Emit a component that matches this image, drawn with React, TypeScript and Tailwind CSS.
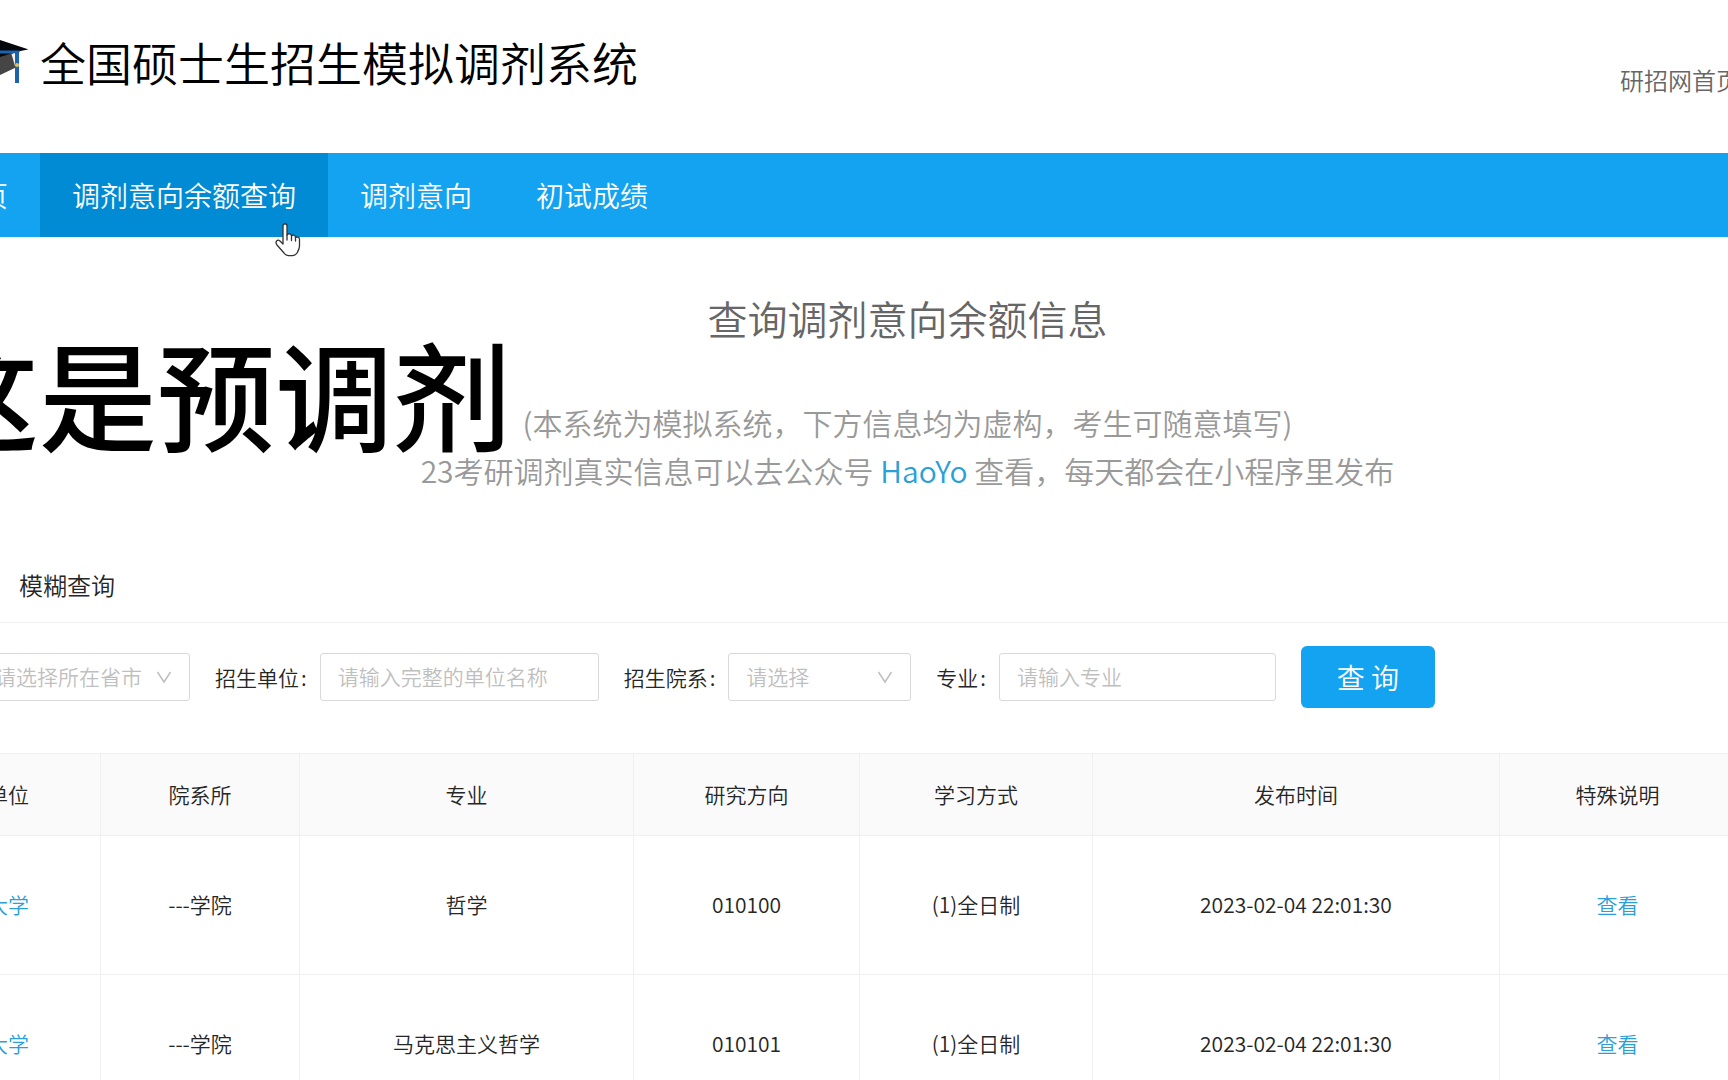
import type { ReactNode } from "react";

const navItems = [
  { label: "首页", active: false },
  { label: "调剂意向余额查询", active: true },
  { label: "调剂意向", active: false },
  { label: "初试成绩", active: false },
];

const headers = ["招生单位", "院系所", "专业", "研究方向", "学习方式", "发布时间", "特殊说明"];

const rows = [
  { school: "北京大学", dept: "---学院", major: "哲学", code: "010100", mode: "(1)全日制", time: "2023-02-04 22:01:30" },
  { school: "北京大学", dept: "---学院", major: "马克思主义哲学", code: "010101", mode: "(1)全日制", time: "2023-02-04 22:01:30" },
];

const cell = "border border-[#f0f0f0] pb-0.5";

function GraduationCap() {
  return (
    <svg className="-ml-8 h-12 w-[60px] shrink-0" viewBox="0 0 60 48" aria-hidden="true">
      <path d="M10 18 L32 19 L45 16 L49 30 L32 38 L10 40 Z" fill="#454545" />
      <path d="M43.500 17 L47 16 V29 Z" fill="#f4f4f4" />
      <path d="M0 12 L26 1 L60.500 12.300 L50 14.500 L32 20 L10 20 Z" fill="#05070d" />
      <path d="M10 12 L32 13.500 L52 13.500 L51 16 L44 16.500 L32 16.500 L10 16 Z" fill="#1c63b0" />
      <path d="M47 15 H51 V46 H47 Z" fill="#1c63b0" />
      <circle cx="49" cy="28" r="2" fill="#e2c15c" />
    </svg>
  );
}

function Chevron() {
  return (
    <svg className="pointer-events-none absolute top-1/2 right-[18px] size-4 -translate-y-1/2" viewBox="0 0 16 16" fill="none" stroke="#bfbfbf" strokeWidth="1.5" aria-hidden="true">
      <path d="M1.500 3 L8 13 L14.500 3" />
    </svg>
  );
}

function HandCursor() {
  return (
    <svg className="pointer-events-none absolute top-[222px] left-[274px] h-9 w-7" viewBox="0 0 28 36" fill="#fff" stroke="#333" strokeWidth="1.3" strokeLinejoin="round" strokeLinecap="round" aria-hidden="true">
      <path d="M9 22 V4 C9 1 13 1 13 4 V13 C14 11 17.500 11.500 17.500 14 C18.500 12.500 21.500 13 21.500 15.500 C23 14.500 25.500 15 25.500 17.500 V24 C25.500 27 24 29 23 31 C21 34.500 12 34.500 10 31 L3 23 C0.500 19.500 3.500 17 6 19 L9 22 Z" />
      <path d="M13 13 V18 M17.500 14 V18.500 M21.500 15.500 V19" fill="none" />
    </svg>
  );
}

function Field({ id, label, children }: { id: string; label: string; children: ReactNode }) {
  return (
    <div className="flex shrink-0 items-center gap-[13px]">
      <label htmlFor={id}>
        {label}
        <span className="ml-0.5">:</span>
      </label>
      {children}
    </div>
  );
}

export default function App() {
  return (
    <div className="relative h-screen overflow-hidden bg-white font-['Noto_Sans_CJK_SC','Noto_Sans',sans-serif] text-[21px] leading-8 font-[350] text-[#262626]">
      <header className="flex h-[153px] items-start justify-between pt-[29px] whitespace-nowrap">
        <div className="flex items-center gap-3">
          <GraduationCap />
          <h1 className="text-[46px] leading-[64px] text-black">全国硕士生招生模拟调剂系统</h1>
        </div>
        <a href="#" className="-mr-3 pt-[35px] text-2xl text-[#666]">研招网首页</a>
      </header>

      <nav className="flex h-[84px] bg-[#13a3f0] pl-10 text-[28px] whitespace-nowrap text-white">
        {navItems.map((item, i) => (
          <a
            key={item.label}
            href="#"
            className={`flex shrink-0 items-center px-8 ${item.active ? "bg-[#008bd4]" : ""} ${i === 0 ? "-ml-[120px]" : ""}`}
          >
            {item.label}
          </a>
        ))}
      </nav>
      <HandCursor />

      <main className="-mr-2 -ml-[127px]">
        <section className="pt-[53px] pl-[206px] text-center">
          <h2 className="text-[40px] leading-[56px] text-[#666]">查询调剂意向余额信息</h2>
          <p className="mt-[52px] text-[30px] leading-[48px] text-[#999]">
            (本系统为模拟系统，下方信息均为虚构，考生可随意填写)
            <br />
            23考研调剂真实信息可以去公众号 <a href="#" className="text-[#2a9fd8]">HaoYo</a> 查看，每天都会在小程序里发布
          </p>
        </section>

        <div role="tablist" className="mt-[54px] flex h-[75px] items-center border-b border-[#f0f0f0] pl-[146px] text-2xl">
          <button role="tab" type="button">模糊查询</button>
        </div>

        <form className="mt-[23px] flex items-center gap-[25px] pl-[104px]" onSubmit={(e) => e.preventDefault()}>
          <div className="relative shrink-0">
            <select aria-label="所在省市" className="h-12 w-[213px] appearance-none rounded-[3px] border border-[#d9d9d9] bg-white pb-0.5 pl-[17px] text-[#bfbfbf]">
              <option>请选择所在省市</option>
            </select>
            <Chevron />
          </div>
          <Field id="unit" label="招生单位">
            <input id="unit" placeholder="请输入完整的单位名称" className="h-12 w-[279px] rounded-[3px] border border-[#d9d9d9] px-[17px] pb-0.5 placeholder:text-[#bfbfbf]" />
          </Field>
          <Field id="dept" label="招生院系">
            <div className="relative">
              <select id="dept" className="h-12 w-[183px] appearance-none rounded-[3px] border border-[#d9d9d9] bg-white pb-0.5 pl-[17px] text-[#bfbfbf]">
                <option>请选择</option>
              </select>
              <Chevron />
            </div>
          </Field>
          <Field id="major" label="专业">
            <input id="major" placeholder="请输入专业" className="h-12 w-[277px] rounded-[3px] border border-[#d9d9d9] px-[17px] pb-0.5 placeholder:text-[#bfbfbf]" />
          </Field>
          <button type="submit" className="h-[62px] w-[134px] shrink-0 rounded-md bg-[#13a3f0] text-[28px] text-white">查 询</button>
        </form>

        <table className="mt-[45px] w-full table-fixed border-collapse text-center">
          <colgroup>
            <col className="w-[227px]" />
            <col className="w-[199px]" />
            <col className="w-[334px]" />
            <col className="w-[226px]" />
            <col className="w-[233px]" />
            <col className="w-[407px]" />
            <col />
          </colgroup>
          <thead>
            <tr className="h-[82px] bg-[#fafafa]">
              {headers.map((h) => (
                <th key={h} scope="col" className={`${cell} font-[350]`}>{h}</th>
              ))}
            </tr>
          </thead>
          <tbody>
            {rows.map((r) => (
              <tr key={r.code} className="h-[139px]">
                <td className={cell}><a href="#" className="text-[#2a9fd8]">{r.school}</a></td>
                <td className={cell}>{r.dept}</td>
                <td className={cell}>{r.major}</td>
                <td className={cell}>{r.code}</td>
                <td className={cell}>{r.mode}</td>
                <td className={cell}>{r.time}</td>
                <td className={cell}><a href="#" className="text-[#2a9fd8]">查看</a></td>
              </tr>
            ))}
          </tbody>
        </table>
      </main>

      <p className="pointer-events-none absolute top-[332px] -left-[79px] text-[118px] leading-[120px] font-medium whitespace-nowrap text-black">这是预调剂</p>
    </div>
  );
}
